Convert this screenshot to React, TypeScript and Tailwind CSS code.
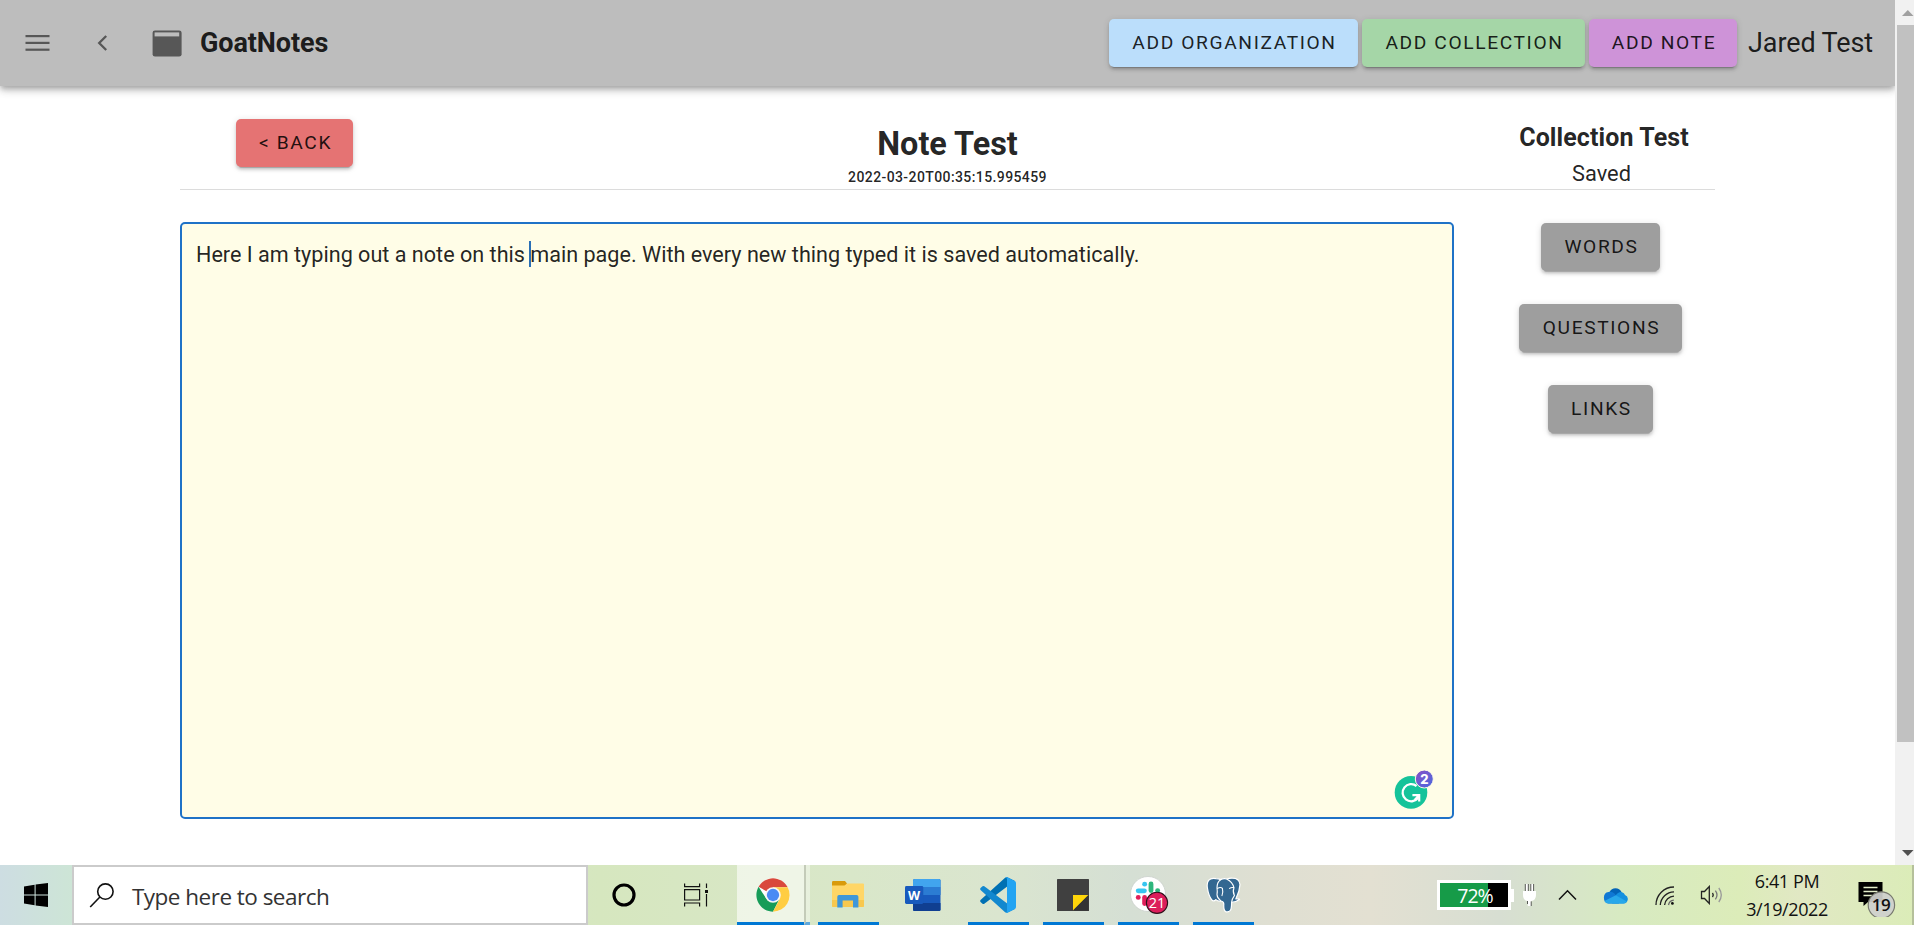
import type { ReactNode } from "react";

const raised =
  "shadow-[0_4px_1px_-3px_rgba(0,0,0,0.2),0_3px_3px_0_rgba(0,0,0,0.14),0_1px_7px_0_rgba(0,0,0,0.12)]";

function Button({ className, children }: { className: string; children: ReactNode }) {
  return (
    <button
      className={`flex h-[48px] shrink-0 items-center justify-center whitespace-nowrap rounded-[5px] pl-[2px] pt-[1px] text-[19.2px] font-[450] tracking-[1.62px] text-black/87 ${raised} ${className}`}
    >
      {children}
    </button>
  );
}

function AppBar() {
  return (
    <header className="relative z-10 flex h-[86px] shrink-0 items-center bg-[#bdbdbd] shadow-[0_3px_5px_-1px_rgba(0,0,0,0.2),0_5px_7px_0_rgba(0,0,0,0.14),0_1px_13px_0_rgba(0,0,0,0.12)]">
      <svg className="ml-[25px] h-[16px] w-[25px]" viewBox="0 0 25 16" fill="#575757">
        <rect x="0.5" y="0" width="24" height="2.2" />
        <rect x="0.5" y="6.8" width="24" height="2.2" />
        <rect x="0.5" y="13.6" width="24" height="2.2" />
      </svg>
      <svg className="ml-[47px] h-[16px] w-[11px]" viewBox="0 0 11 16" fill="none" stroke="#575757" strokeWidth="2.3">
        <path d="M9.2 1 L2.2 8 L9.2 15" />
      </svg>
      <svg className="ml-[44px] h-[27px] w-[30px]" viewBox="0 0 30 27">
        <rect x="0.6" y="0.4" width="29" height="26.2" rx="2.4" fill="#575757" />
        <rect x="2.6" y="2.4" width="24.6" height="4" fill="#bdbdbd" />
      </svg>
      <h1 className="ml-[18px] text-[27px] font-bold tracking-[-0.1px] text-black/87">GoatNotes</h1>
      <div className="ml-auto flex items-center gap-[4px] pr-[22px]">
        <Button className="w-[249px] bg-[#bbdefb]">ADD ORGANIZATION</Button>
        <Button className="w-[223px] bg-[#a5d6a7]">ADD COLLECTION</Button>
        <Button className="w-[148px] bg-[#ce93d8]">ADD NOTE</Button>
        <span className="ml-[7px] w-[125px] whitespace-nowrap pt-[1px] text-[27px] tracking-[-0.1px] text-black/87">
          Jared Test
        </span>
      </div>
    </header>
  );
}

function GrammarBadge() {
  return (
    <svg className="absolute bottom-[8px] right-[18px] h-[40px] w-[40px]" viewBox="0 0 40 40">
      <defs>
        <linearGradient id="count" x1="0" y1="0" x2="1" y2="1">
          <stop offset="0" stopColor="#8a4fc4" />
          <stop offset="1" stopColor="#4a6be0" />
        </linearGradient>
      </defs>
      <circle cx="17" cy="23.4" r="16.3" fill="#15c39a" />
      <path d="M22.6 17 A8.6 8.6 0 1 0 24 29" fill="none" stroke="#fff" strokeWidth="2.3" />
      <path d="M18.4 26.2 H25.2 V32.6 M24.6 26.8 L20.6 31" fill="none" stroke="#fff" strokeWidth="2.2" />
      <circle cx="30.3" cy="10" r="9" fill="url(#count)" stroke="#fffde7" strokeWidth="1" />
      <text x="30.3" y="14.6" textAnchor="middle" fontFamily="Inter, sans-serif" fontWeight="800" fontSize="13" fill="#fff">
        2
      </text>
    </svg>
  );
}

function NotePage() {
  return (
    <main className="flex flex-1 flex-col pl-[180px] pr-[180px] text-black/87">
      <div className="flex h-[104px] border-b border-[#dcdcdc]">
        <div className="w-[222px] pl-[56px] pt-[33px]">
          <Button className="w-[117px] bg-[#e57373]">&lt; BACK</Button>
        </div>
        <div className="flex flex-1 flex-col items-center pt-[38px]">
          <h2 className="text-[32.4px] font-bold leading-[40px]">Note Test</h2>
          <p className="mt-[2px] text-[14px] font-medium leading-[22px] tracking-[0.4px]">2022-03-20T00:35:15.995459</p>
        </div>
        <div className="flex w-[222px] flex-col items-center pt-[36px]">
          <h3 className="whitespace-nowrap text-[25px] font-bold leading-[32px] tracking-[0.1px]">Collection Test</h3>
          <p className="mt-[6px] pr-[5px] text-[21.8px] leading-[28px]">Saved</p>
        </div>
      </div>
      <div className="mt-[32px] flex">
        <div className="relative h-[597px] w-[1274px] shrink-0 rounded-[5px] border-2 border-[#1f72c7] bg-[#fffde7] pl-[14px] pt-[15px]">
          <p className="flex whitespace-pre text-[21.6px] leading-[32px]">
            <span>Here I am typing out a note on this </span>
            <span className="-ml-[1px] -mr-[1px] mt-[2px] h-[26px] w-[2px] bg-[#2a6fb5]" />
            <span>main page. With every new thing typed it is saved automatically.</span>
          </p>
          <GrammarBadge />
        </div>
        <div className="ml-[32px] flex w-[229px] flex-col items-center gap-[33px] pt-[1px]">
          <Button className="w-[119px] bg-[#9e9e9e]">WORDS</Button>
          <Button className="w-[163px] bg-[#9e9e9e]">QUESTIONS</Button>
          <Button className="w-[105px] bg-[#9e9e9e]">LINKS</Button>
        </div>
      </div>
    </main>
  );
}

function ScrollBar() {
  return (
    <div className="flex w-[19px] flex-col items-end bg-[#f1f1f1]">
      <svg className="h-[25px] w-[17px]" viewBox="0 0 17 25">
        <path d="M5 16 L10.8 10 L16.5 16 Z" fill="#a0a0a0" />
      </svg>
      <div className="h-[717px] w-[17px] bg-[#c1c1c1]" />
      <svg className="mt-auto h-[25px] w-[17px]" viewBox="0 0 17 25">
        <path d="M5 10 L10.8 16 L16.5 10 Z" fill="#505050" />
      </svg>
    </div>
  );
}

function ChromeIcon() {
  return (
    <svg className="h-[34px] w-[34px]" viewBox="0 0 48 48">
      <circle cx="24" cy="24" r="23.5" fill="#fff" />
      <path d="M24 24 L3.65 12.25 A23.5 23.5 0 0 1 44.35 12.25 L44.35 13.2 H24 Z" fill="#d9493c" />
      <path d="M3.65 12.25 A23.5 23.5 0 0 0 24 47.5 L33.3 29.4 L24 24 L14.6 29.4 Z" fill="#189c58" />
      <path d="M44.8 13.2 A23.5 23.5 0 0 1 24 47.5 L33.5 29.5 L24 13.2 Z" fill="#ffcd42" />
      <circle cx="24" cy="24" r="11" fill="#f6f6f6" />
      <circle cx="24" cy="24" r="8.7" fill="#4a8af4" />
    </svg>
  );
}

function FolderIcon() {
  return (
    <svg className="mr-[2px] h-[28px] w-[32px]" viewBox="0 0 32 28">
      <path d="M0 1.2 Q0 0 1.2 0 H13 L15 2.5 L13 5 H0 Z" fill="#d99a0b" />
      <path d="M0 4.6 H12.5 L15.2 2.6 H31 Q32 2.6 32 3.6 V25 Q32 26 31 26 H1 Q0 26 0 25 Z" fill="#ffd667" />
      <path d="M0 19 H32 V25 Q32 26 31 26 H1 Q0 26 0 25 Z" fill="#f8c84f" />
      <path d="M5.3 26.5 V15.8 Q5.3 14 7 14 H24.6 Q26.4 14 26.4 15.8 V26.5 H21 V19.5 H10.6 V26.5 Z" fill="#3f97d9" />
    </svg>
  );
}

function WordIcon() {
  return (
    <svg className="mr-[2px] h-[32px] w-[36px]" viewBox="0 0 36 32">
      <rect x="8" y="0" width="27.5" height="32" rx="1.6" fill="#185abd" />
      <path d="M8 8 V1.6 Q8 0 9.6 0 H34 Q35.5 0 35.5 1.6 V8 Z" fill="#41a5ee" />
      <rect x="8" y="8" width="27.5" height="8" fill="#2b7cd3" />
      <path d="M8 24 H35.5 V30.4 Q35.5 32 34 32 H9.6 Q8 32 8 30.4 Z" fill="#103f91" />
      <rect x="0" y="7" width="18.3" height="18" rx="1.4" fill="#185abd" />
      <text x="9.1" y="20.6" textAnchor="middle" fontFamily="Open Sans, sans-serif" fontWeight="700" fontSize="12.5" fill="#fff">
        W
      </text>
    </svg>
  );
}

function CodeIcon() {
  return (
    <svg className="mr-[2px] h-[36px] w-[36px]" viewBox="0 0 100 100">
      <path d="M97 11 L76 1 Q72 0 69 2.5 L1.5 64 Q-0.5 67 1.5 69.5 L7 74.5 Q9.5 76 12 74.5 L93 13 Z" fill="#0070b3" />
      <path d="M97 89 L76 99 Q72 100 69 97.5 L1.5 36 Q-0.5 33 1.5 30.5 L7 25.5 Q9.5 24 12 25.5 L93 87 Z" fill="#1288cf" />
      <path d="M76 99 Q72 100 69 97.5 Q75 101 75 94 V6 Q75 0 69 2.5 Q72 0 76 1 L96.6 10.9 Q100 12.5 100 16.4 V83.6 Q100 87.5 96.6 89.1 Z" fill="#23a4f2" />
    </svg>
  );
}

function StickyIcon() {
  return (
    <svg className="mr-[1px] h-[32px] w-[32px]" viewBox="0 0 32 32">
      <rect width="32" height="32" rx="0.6" fill="#404040" />
      <path d="M16 16 H31.5 L16 31.5 Z" fill="#ffd60a" />
      <path d="M31.5 16 V31.5 H16 Z" fill="#333" />
    </svg>
  );
}

function SlackIcon() {
  return (
    <svg className="ml-[2px] mt-[2px] h-[40px] w-[40px]" viewBox="0 0 40 40">
      <circle cx="18" cy="18" r="17.5" fill="#fff" stroke="#c9cfca" strokeWidth="0.8" />
      <g strokeWidth="4.8" strokeLinecap="round">
        <path d="M14.6 8.2 H14.7" stroke="#36c5f0" />
        <path d="M8.2 14.8 H14.4" stroke="#36c5f0" />
        <path d="M21 8 V14.6" stroke="#2eb67d" />
        <path d="M27.6 14.6 H27.7" stroke="#2eb67d" />
        <path d="M14.6 21.4 V27.6" stroke="#e01e5a" />
        <path d="M8.2 21.4 H8.3" stroke="#e01e5a" />
        <path d="M21 21.4 H27.6" stroke="#ecb22e" />
      </g>
      <circle cx="27" cy="26.8" r="10.6" fill="#dc1e5b" stroke="#2b1018" strokeWidth="1.1" />
      <text x="27" y="32" textAnchor="middle" fontFamily="Open Sans, sans-serif" fontSize="14.5" fill="#fff">
        21
      </text>
    </svg>
  );
}

function ElephantIcon() {
  return (
    <svg className="h-[36px] w-[35px]" viewBox="0 0 35 36">
      <path
        d="M10 1.6 Q5 0.6 2.6 3.4 Q0.6 6 1.4 11 Q2.6 18.6 5.6 22.6 Q7.6 25.2 9.8 22.6 Q12 24.6 15 24 Q17.8 24.4 17.8 27 Q17.4 33 19.6 34.6 Q22.4 35.6 24.4 33.4 Q25.6 31.6 25.6 25.4 Q29.6 25.4 33.6 22.6 Q33.6 21.4 29.8 22 Q33.6 14.6 34 7.6 Q33.4 1.2 26.4 1.2 Q23.6 1 21 2 Q17.6 1 14.6 2.6 Q12.4 1.6 10 1.6 Z"
        fill="#336791"
        stroke="#fff"
        strokeWidth="1.2"
        strokeLinejoin="round"
      />
      <path
        d="M14.6 2.8 Q11 5 11 11 Q11.6 14.6 11 17.6 Q11 21 14.6 23.6 M11.2 11.6 Q14.6 9.6 16.4 11.4 Q17.4 15.4 16 18.6 M21 2.2 Q26.4 4.8 28 10.6 Q26.4 14.4 28.4 18.6 Q26 21.8 25.6 25.2 M28 10.8 Q25.6 10 23.6 11.4"
        fill="none"
        stroke="#fff"
        strokeWidth="1.1"
        strokeLinecap="round"
      />
    </svg>
  );
}

function TaskButton({ active = true, children }: { active?: boolean; children: ReactNode }) {
  return (
    <div
      className={`flex h-[60px] w-[61px] shrink-0 items-center justify-center border-b-[3px] pt-[3px] ${
        active ? "border-[#0078d4]" : "border-transparent"
      }`}
    >
      {children}
    </div>
  );
}

function Battery() {
  return (
    <div className="flex items-center">
      <div className="flex h-[30px] w-[74px] border-[3px] border-white bg-black">
        <div className="h-full w-[48px] bg-[#169b48]">
          <div className="w-[70px] pt-[1px] text-center text-[19.5px] leading-[24px] tracking-[-1px] text-white">72%</div>
        </div>
      </div>
      <div className="h-[13px] w-[3px] bg-white" />
    </div>
  );
}

function Tray() {
  return (
    <div className="flex flex-1 items-center pl-[183px]">
      <Battery />
      <svg className="ml-[8px] h-[24px] w-[15px]" viewBox="0 0 15 24">
        <path d="M3.5 1 V8 H1 V12 Q1 17.5 5.8 18 V23 H9 V18 Q14 17.5 14 12 V8 H11.5 V1 H8.8 V8 H6.2 V1 Z" fill="#fff" />
        <path d="M3.3 1 V8 M6.3 8 V1 M8.8 1 V8 M11.6 1 V8 M5.5 18 V21 M9.2 23 V18.4" stroke="#333" strokeWidth="0.8" fill="none" />
      </svg>
      <svg className="ml-[21px] h-[12px] w-[19px]" viewBox="0 0 19 12" fill="none" stroke="#111" strokeWidth="1.5">
        <path d="M1 10.5 L9.5 1.8 L18 10.5" />
      </svg>
      <svg className="ml-[26px] h-[17px] w-[25px]" viewBox="0 0 25 17">
        <path d="M6.5 5 A6.6 6.6 0 0 1 18.5 5 L17 11 H6 Z" fill="#0364b8" />
        <path d="M5.5 16.5 A5.3 5.8 0 0 1 5.5 5 Q9 4 12 7 L16 16.5 Z" fill="#0f78d4" />
        <path d="M12 10 Q14 5 18.5 5 Q21.5 6 22 8 A4.4 4.4 0 0 1 20.5 16.5 H9 Z" fill="#1490df" />
        <path d="M1.4 14 L12.8 8.2 L23.8 14.4 Q22.5 16.5 20.5 16.5 H5.5 Q2.8 16.5 1.4 14 Z" fill="#28a8ea" />
      </svg>
      <svg className="ml-[27px] mt-[2px] h-[20px] w-[20px]" viewBox="0 0 20 20" fill="none" stroke="#222" strokeWidth="1.3">
        <path d="M1 19 A18 18 0 0 1 19 1" />
        <path d="M5.3 19 A14 14 0 0 1 19 5.8" />
        <path d="M9.6 19 A9.6 9.6 0 0 1 19 10.2" />
        <path d="M13.5 19 A6 6 0 0 1 18.8 14.2" stroke="#666" />
        <circle cx="17.4" cy="17.4" r="1.4" fill="#111" stroke="none" />
      </svg>
      <svg className="ml-[25px] h-[20px] w-[24px]" viewBox="0 0 24 20" fill="none" stroke="#222" strokeWidth="1.3">
        <path d="M1.5 6.5 H4.5 L9.3 1.5 V18.5 L4.5 13.5 H1.5 Z" />
        <path d="M12.5 8 Q14 10 12.5 12" />
        <path d="M15.4 5.6 Q18.6 10 15.4 14.4" stroke="#777" />
        <path d="M18.8 3 Q23.8 10 18.8 17" stroke="#999" />
      </svg>
      <div className="ml-[14px] flex w-[98px] flex-col items-center whitespace-nowrap font-['Open_Sans',sans-serif] text-[18px] leading-[28px] tracking-[-0.4px] text-[#111]">
        <span>6:41 PM</span>
        <span>3/19/2022</span>
      </div>
      <svg className="ml-[22px] mt-[4px] h-[40px] w-[40px]" viewBox="0 0 40 40">
        <path d="M0.5 5 H24.5 V25 H10 L5.5 29 V25 H0.5 Z" fill="#000" />
        <path d="M5.5 10.5 H19.5 M5.5 14.5 H19.5 M5.5 18.5 H14" stroke="#e4eecb" strokeWidth="1.3" />
        <circle cx="23.4" cy="28" r="13.2" fill="#cfd0cd" fillOpacity="0.93" stroke="#77796f" strokeWidth="1.2" />
        <text x="23" y="34" textAnchor="middle" fontFamily="Open Sans, sans-serif" fontWeight="600" fontSize="17" letterSpacing="-0.5" fill="#111">
          19
        </text>
      </svg>
    </div>
  );
}

function TaskBar() {
  return (
    <footer className="flex h-[60px] shrink-0 border-r-2 border-[#b5c09b] bg-[linear-gradient(90deg,#cddde2_0px,#cde5d6_72px,#d6e7bf_600px,#d9e7c9_850px,#dae5cf_1000px,#d5dfd4_1130px,#dfdfd2_1270px,#e3e0d2_1370px,#d7ded2_1500px,#d7eac2_1620px,#dcecb9_1740px,#e1e8c4_1800px,#dbecb8_1914px)] font-['Open_Sans',sans-serif]">
      <div className="flex w-[72px] shrink-0 items-center justify-center">
        <svg className="h-[24px] w-[24px]" viewBox="0 0 24 24">
          <path d="M0 3.4 L10.6 1.8 V11.5 H0 Z M11.6 1.6 L24 0 V11.5 H11.6 Z M0 12.5 H10.6 V22.2 L0 20.6 Z M11.6 12.5 H24 V24 L11.6 22.4 Z" />
        </svg>
      </div>
      <div className="flex w-[516px] shrink-0 items-center border-2 border-[#cbcbcb] bg-white pl-[15px]">
        <svg className="h-[25px] w-[25px]" viewBox="0 0 25 25" fill="none" stroke="#111" strokeWidth="1.6">
          <circle cx="16.4" cy="8.6" r="7.7" />
          <path d="M10.9 14 L1.2 24" />
        </svg>
        <span className="ml-[18px] pt-[4px] text-[22.5px] tracking-[-0.52px] text-[#333]">Type here to search</span>
      </div>
      <div className="flex w-[72px] shrink-0 items-center justify-center">
        <svg className="h-[24px] w-[24px]" viewBox="0 0 24 24">
          <circle cx="12" cy="12" r="10" fill="none" stroke="#000" strokeWidth="3.2" />
        </svg>
      </div>
      <div className="flex w-[77px] shrink-0 items-center pl-[24px]">
        <svg className="h-[24px] w-[25px]" viewBox="0 0 25 24" fill="none" stroke="#111" strokeWidth="1.2">
          <path d="M0.6 0.5 V3.6 H15.6 V0.5 M0.6 6.6 H15.6 V17 H0.6 Z M0.6 23.5 V20 H15.6 V23.5 M22.5 0.5 V5 M22.5 11 V23.5" />
          <rect x="21" y="7" width="3" height="3" fill="#111" stroke="none" />
        </svg>
      </div>
      <div className="flex w-[67px] shrink-0 items-center justify-center border-b-[3px] border-[#0078d4] bg-white/58 pl-[4px] pt-[3px]">
        <ChromeIcon />
      </div>
      <div className="w-[6px] shrink-0 border-b-[3px] border-l-2 border-b-[#5fa8dc] border-l-[#c4cbb9] bg-white/40" />
      <div className="ml-[8px] flex shrink-0 gap-[14px]">
        <TaskButton>
          <FolderIcon />
        </TaskButton>
        <TaskButton active={false}>
          <WordIcon />
        </TaskButton>
        <TaskButton>
          <CodeIcon />
        </TaskButton>
        <TaskButton>
          <StickyIcon />
        </TaskButton>
        <TaskButton>
          <SlackIcon />
        </TaskButton>
        <TaskButton>
          <ElephantIcon />
        </TaskButton>
      </div>
      <Tray />
    </footer>
  );
}

export default function App() {
  return (
    <div className="flex h-[925px] w-[1914px] flex-col overflow-hidden bg-white font-[Roboto,sans-serif]">
      <div className="flex h-[865px] shrink-0">
        <div className="flex w-[1895px] flex-col overflow-hidden">
          <AppBar />
          <NotePage />
        </div>
        <ScrollBar />
      </div>
      <TaskBar />
    </div>
  );
}
